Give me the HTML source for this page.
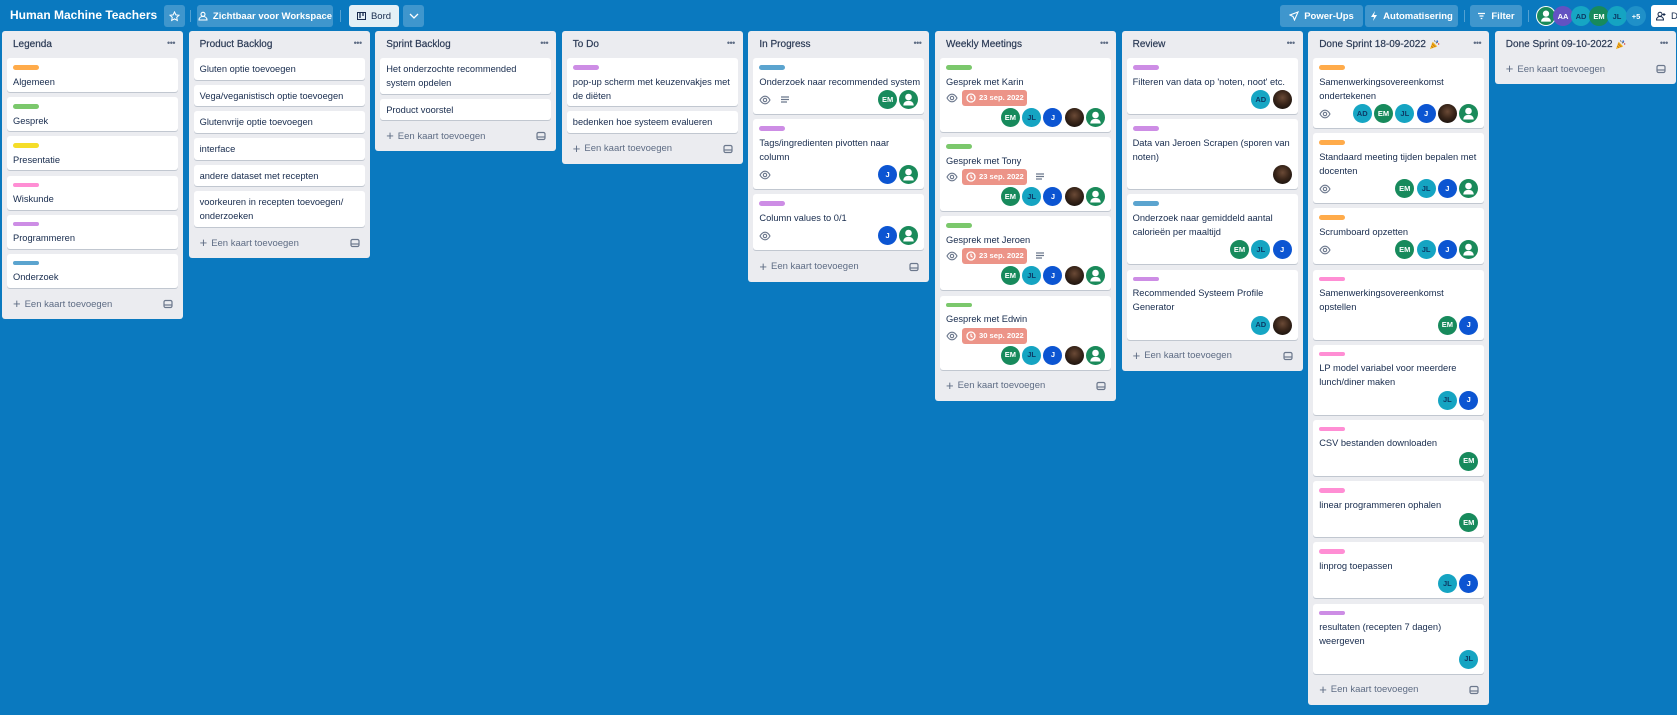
<!DOCTYPE html>
<html><head><meta charset="utf-8">
<style>
*{box-sizing:border-box;margin:0;padding:0}
body{width:1677px;height:715px;overflow:hidden;background:#0a79bf;font-family:"Liberation Sans",Arial,sans-serif;color:#172b4d;position:relative}
.hdr{position:absolute;left:0;top:0;width:1677px;height:31px}
.title{position:absolute;left:10px;top:8px;font-weight:bold;font-size:12px;color:#fff;white-space:nowrap}
.hb{position:absolute;top:5px;height:22px;background:rgba(255,255,255,.22);border-radius:3px;color:#fff;font-size:9.5px;font-weight:bold;display:flex;align-items:center;justify-content:center;gap:5px;white-space:nowrap}
.sep{position:absolute;top:10px;width:1px;height:12px;background:rgba(255,255,255,.3)}
.list{position:absolute;top:31px;width:181px;background:#ebecf0;border-radius:3px;padding:0 5px}
.lh{height:27px;display:flex;align-items:center;padding-left:6px;font-size:10px;color:#2b3a55;position:relative;white-space:nowrap;-webkit-text-stroke:.2px #2b3a55}
.lh .dots{position:absolute;right:3px;top:7px;font-size:9px;color:#5e6c84;letter-spacing:-.5px;-webkit-text-stroke:0}
.card{background:#fff;border-radius:3px;box-shadow:0 1px 0 #c1c7d0;padding:4px 6px 3.5px;margin-bottom:5.2px;font-size:9.3px;line-height:14px;color:#172b4d;white-space:nowrap}
.lb{width:26px;height:4.5px;border-radius:3px;margin:3px 0 5px}
.o{background:#ffab4a}.g{background:#7bc86c}.y{background:#f5dd29}.p{background:#ff8ed4}.pu{background:#cd8de5}.b{background:#5ba4cf}
.ft{display:flex;flex-wrap:wrap;align-items:center;margin:1.5px 0 1.5px;min-height:19px}
.bd{display:flex;align-items:center;gap:4px}
.avs{margin-left:auto;display:flex;gap:2.3px}
.full{width:100%;justify-content:flex-end;margin-top:2px}
.av{width:19px;height:19px;border-radius:50%;display:flex;align-items:center;justify-content:center;font-size:7.5px;font-weight:bold}
.em{background:#178a5c;color:#fff}.jl{background:#15a4c2;color:#0d3b66}.j{background:#0c55d2;color:#fff}.ad{background:#16a6c4;color:#0d3b66}.aa{background:#6352c2;color:#fff}.pl{background:#1f90c8;color:#fff}
.ph{background:radial-gradient(circle at 50% 40%,#6b4a36 0,#3a261a 45%,#1b130e 80%)}
.date{background:#ec9488;color:#fff;font-weight:bold;font-size:7.6px;height:16px;width:65px;border-radius:3px;display:flex;align-items:center;padding-left:4px;gap:3px;white-space:nowrap;overflow:hidden}
.add{height:22px;margin:4px 0 4px;display:flex;align-items:center;padding-left:6px;font-size:9.5px;color:#5e6c84;position:relative;white-space:nowrap}
.add .pl2{font-size:13px;margin-right:4px;line-height:10px;font-weight:normal}
.tpl{position:absolute;right:5px;top:6px}
</style></head><body>
<svg width="0" height="0" style="position:absolute">
<defs>
<symbol id="eye" viewBox="0 0 12 12"><path d="M1 6c1.5-2.6 3.2-3.8 5-3.8s3.5 1.2 5 3.8c-1.5 2.6-3.2 3.8-5 3.8S2.5 8.6 1 6z" fill="none" stroke="#6b778c" stroke-width="1.1"/><circle cx="6" cy="6" r="1.7" fill="none" stroke="#6b778c" stroke-width="1.1"/></symbol>
<symbol id="desc" viewBox="0 0 12 12"><path d="M2 3h8M2 5.5h8M2 8h6" stroke="#6b778c" stroke-width="1.2"/></symbol>
<symbol id="usr" viewBox="0 0 19 19"><circle cx="9.5" cy="9.5" r="9.5" fill="#1a8a5a"/><circle cx="9.5" cy="7" r="3.3" fill="#fff"/><path d="M4.3 15.5c0-3 2.2-4.6 5.2-4.6s5.2 1.6 5.2 4.6z" fill="#fff"/></symbol>
<symbol id="clk" viewBox="0 0 10 10"><circle cx="5" cy="5" r="4" fill="none" stroke="#fff" stroke-width="1.3"/><path d="M5 2.8V5.2l1.6 1" fill="none" stroke="#fff" stroke-width="1.2"/></symbol>
<symbol id="tp" viewBox="0 0 10 10"><rect x="1" y="1.5" width="8" height="7" rx="1.5" fill="none" stroke="#6b778c" stroke-width="1.2"/><path d="M1 6h8" stroke="#6b778c" stroke-width="1.2"/></symbol>
<symbol id="party" viewBox="0 0 12 12"><path d="M1 11l3-8 5 5z" fill="#f2b31b"/><path d="M2.3 7.5l2.2 2.2M3.2 5l3.8 3.8" stroke="#c46b14" stroke-width=".8"/><circle cx="9" cy="2.5" r="1" fill="#2d6ad8"/><circle cx="10.5" cy="5.5" r=".8" fill="#d83a3a"/><path d="M6 1.5l.8 1.5M7.5 4.5l2-1" stroke="#333" stroke-width=".8"/></symbol>
</defs></svg>

<div class="hdr">
<div class="title">Human Machine Teachers</div>
<div class="hb" style="left:164px;width:21px"><svg width="11" height="11" viewBox="0 0 12 12"><path d="M6 1l1.5 3.2 3.4.4-2.5 2.3.7 3.4L6 8.6 2.9 10.3l.7-3.4L1.1 4.6l3.4-.4z" fill="none" stroke="#fff" stroke-width="1.1"/></svg></div>
<div class="sep" style="left:190px"></div>
<div class="hb" style="left:197px;width:136px"><svg width="10" height="10" viewBox="0 0 10 10"><circle cx="5" cy="3.3" r="2" fill="none" stroke="#fff" stroke-width="1.1"/><path d="M1 9c0-2.3 1.8-3.5 4-3.5S9 6.7 9 9z" fill="none" stroke="#fff" stroke-width="1.1"/></svg>Zichtbaar voor Workspace</div>
<div class="sep" style="left:340px"></div>
<div class="hb" style="left:349px;width:50px;background:#e4f0f6;color:#172b4d;font-weight:normal"><svg width="9" height="8" viewBox="0 0 9 8"><rect x=".5" y=".5" width="8" height="7" fill="none" stroke="#172b4d"/><path d="M3 1v5M6 1v3" stroke="#172b4d" stroke-width="1.3"/></svg>Bord</div>
<div class="hb" style="left:403px;width:21px"><svg width="10" height="6" viewBox="0 0 10 6"><path d="M1 1l4 4 4-4" fill="none" stroke="#fff" stroke-width="1.3"/></svg></div>
<div class="hb" style="left:1280px;width:83px"><svg width="10" height="10" viewBox="0 0 10 10"><path d="M9 1L1 4l3 1.5L5.5 9z" fill="none" stroke="#fff" stroke-width="1.1"/></svg>Power-Ups</div>
<div class="hb" style="left:1365px;width:93px"><svg width="8" height="10" viewBox="0 0 8 10"><path d="M5 0L1 6h3L3 10l4-6H4z" fill="#fff"/></svg>Automatisering</div>
<div class="sep" style="left:1464px"></div>
<div class="hb" style="left:1470px;width:52px"><svg width="9" height="8" viewBox="0 0 9 8"><path d="M1 1.5h7M2.5 4h4M3.7 6.5h1.6" stroke="#fff" stroke-width="1.2"/></svg>Filter</div>
<div class="sep" style="left:1528px"></div>
<div style="position:absolute;left:1536px;top:6px;display:flex;gap:0">
<svg width="20" height="20" style="margin-right:-1px"><circle cx="10" cy="10" r="10" fill="#fff"/><use href="#usr" x="1" y="1" width="18" height="18"/></svg>
<div class="av aa" style="width:20px;height:20px;margin-left:-2px">AA</div>
<div class="av ad" style="width:20px;height:20px;margin-left:-2px">AD</div>
<div class="av em" style="width:20px;height:20px;margin-left:-2px">EM</div>
<div class="av jl" style="width:20px;height:20px;margin-left:-2px">JL</div>
<div class="av pl" style="width:20px;height:20px;margin-left:-1px">+5</div>
</div>
<div class="hb" style="left:1651px;width:40px;background:#fff;color:#172b4d;justify-content:flex-start;padding-left:5px;font-weight:normal"><svg width="10" height="10" viewBox="0 0 10 10"><circle cx="4" cy="3.3" r="2" fill="none" stroke="#172b4d"/><path d="M.5 9c0-2.3 1.5-3.5 3.5-3.5S7.5 6.7 7.5 9zM8 2v3M6.5 3.5h3" fill="none" stroke="#172b4d"/></svg>D</div>
</div>

<div class="list" style="left:2px">
<div class="lh">Legenda<span class="dots">•••</span></div>
<div class="card"><div class="lb o"></div>Algemeen</div>
<div class="card"><div class="lb g"></div>Gesprek</div>
<div class="card"><div class="lb y"></div>Presentatie</div>
<div class="card"><div class="lb p"></div>Wiskunde</div>
<div class="card"><div class="lb pu"></div>Programmeren</div>
<div class="card"><div class="lb b"></div>Onderzoek</div>
<div class="add"><span class="pl2">+</span>Een kaart toevoegen<svg class="tpl" width="10" height="10"><use href="#tp"/></svg></div>
</div>

<div class="list" style="left:188.6px">
<div class="lh">Product Backlog<span class="dots">•••</span></div>
<div class="card">Gluten optie toevoegen</div>
<div class="card">Vega/veganistisch optie toevoegen</div>
<div class="card">Glutenvrije optie toevoegen</div>
<div class="card">interface</div>
<div class="card">andere dataset met recepten</div>
<div class="card">voorkeuren in recepten toevoegen/<br>onderzoeken</div>
<div class="add"><span class="pl2">+</span>Een kaart toevoegen<svg class="tpl" width="10" height="10"><use href="#tp"/></svg></div>
</div>

<div class="list" style="left:375.2px">
<div class="lh">Sprint Backlog<span class="dots">•••</span></div>
<div class="card">Het onderzochte recommended<br>system opdelen</div>
<div class="card">Product voorstel</div>
<div class="add"><span class="pl2">+</span>Een kaart toevoegen<svg class="tpl" width="10" height="10"><use href="#tp"/></svg></div>
</div>

<div class="list" style="left:561.8px">
<div class="lh">To Do<span class="dots">•••</span></div>
<div class="card"><div class="lb pu"></div>pop-up scherm met keuzenvakjes met<br>de diëten</div>
<div class="card">bedenken hoe systeem evalueren</div>
<div class="add"><span class="pl2">+</span>Een kaart toevoegen<svg class="tpl" width="10" height="10"><use href="#tp"/></svg></div>
</div>

<div class="list" style="left:748.4px">
<div class="lh">In Progress<span class="dots">•••</span></div>
<div class="card"><div class="lb b"></div>Onderzoek naar recommended system
<div class="ft"><div class="bd"><svg width="12" height="12"><use href="#eye"/></svg><svg width="12" height="12" style="margin-left:4px"><use href="#desc"/></svg></div><div class="avs"><div class="av em">EM</div><svg width="19" height="19"><use href="#usr"/></svg></div></div></div>
<div class="card"><div class="lb pu"></div>Tags/ingredienten pivotten naar<br>column
<div class="ft"><div class="bd"><svg width="12" height="12"><use href="#eye"/></svg></div><div class="avs"><div class="av j">J</div><svg width="19" height="19"><use href="#usr"/></svg></div></div></div>
<div class="card"><div class="lb pu"></div>Column values to 0/1
<div class="ft"><div class="bd"><svg width="12" height="12"><use href="#eye"/></svg></div><div class="avs"><div class="av j">J</div><svg width="19" height="19"><use href="#usr"/></svg></div></div></div>
<div class="add"><span class="pl2">+</span>Een kaart toevoegen<svg class="tpl" width="10" height="10"><use href="#tp"/></svg></div>
</div>

<div class="list" style="left:935px">
<div class="lh">Weekly Meetings<span class="dots">•••</span></div>
<div class="card"><div class="lb g"></div>Gesprek met Karin
<div class="ft"><div class="bd"><svg width="12" height="12"><use href="#eye"/></svg><div class="date"><svg width="10" height="10"><use href="#clk"/></svg>23 sep. 2022</div></div><div class="avs full"><div class="av em">EM</div><div class="av jl">JL</div><div class="av j">J</div><div class="av ph"></div><svg width="19" height="19"><use href="#usr"/></svg></div></div></div>
<div class="card"><div class="lb g"></div>Gesprek met Tony
<div class="ft"><div class="bd"><svg width="12" height="12"><use href="#eye"/></svg><div class="date"><svg width="10" height="10"><use href="#clk"/></svg>23 sep. 2022</div><svg width="12" height="12" style="margin-left:3px"><use href="#desc"/></svg></div><div class="avs full"><div class="av em">EM</div><div class="av jl">JL</div><div class="av j">J</div><div class="av ph"></div><svg width="19" height="19"><use href="#usr"/></svg></div></div></div>
<div class="card"><div class="lb g"></div>Gesprek met Jeroen
<div class="ft"><div class="bd"><svg width="12" height="12"><use href="#eye"/></svg><div class="date"><svg width="10" height="10"><use href="#clk"/></svg>23 sep. 2022</div><svg width="12" height="12" style="margin-left:3px"><use href="#desc"/></svg></div><div class="avs full"><div class="av em">EM</div><div class="av jl">JL</div><div class="av j">J</div><div class="av ph"></div><svg width="19" height="19"><use href="#usr"/></svg></div></div></div>
<div class="card"><div class="lb g"></div>Gesprek met Edwin
<div class="ft"><div class="bd"><svg width="12" height="12"><use href="#eye"/></svg><div class="date"><svg width="10" height="10"><use href="#clk"/></svg>30 sep. 2022</div></div><div class="avs full"><div class="av em">EM</div><div class="av jl">JL</div><div class="av j">J</div><div class="av ph"></div><svg width="19" height="19"><use href="#usr"/></svg></div></div></div>
<div class="add"><span class="pl2">+</span>Een kaart toevoegen<svg class="tpl" width="10" height="10"><use href="#tp"/></svg></div>
</div>

<div class="list" style="left:1121.6px">
<div class="lh">Review<span class="dots">•••</span></div>
<div class="card"><div class="lb pu"></div>Filteren van data op 'noten, noot' etc.
<div class="ft"><div class="avs"><div class="av ad">AD</div><div class="av ph"></div></div></div></div>
<div class="card"><div class="lb pu"></div>Data van Jeroen Scrapen (sporen van<br>noten)
<div class="ft"><div class="avs"><div class="av ph"></div></div></div></div>
<div class="card"><div class="lb b"></div>Onderzoek naar gemiddeld aantal<br>calorieën per maaltijd
<div class="ft"><div class="avs"><div class="av em">EM</div><div class="av jl">JL</div><div class="av j">J</div></div></div></div>
<div class="card"><div class="lb pu"></div>Recommended Systeem Profile<br>Generator
<div class="ft"><div class="avs"><div class="av ad">AD</div><div class="av ph"></div></div></div></div>
<div class="add"><span class="pl2">+</span>Een kaart toevoegen<svg class="tpl" width="10" height="10"><use href="#tp"/></svg></div>
</div>

<div class="list" style="left:1308.2px">
<div class="lh">Done Sprint 18-09-2022&nbsp;<svg width="11" height="11"><use href="#party"/></svg><span class="dots">•••</span></div>
<div class="card"><div class="lb o"></div>Samenwerkingsovereenkomst<br>ondertekenen
<div class="ft"><div class="bd"><svg width="12" height="12"><use href="#eye"/></svg></div><div class="avs"><div class="av ad">AD</div><div class="av em">EM</div><div class="av jl">JL</div><div class="av j">J</div><div class="av ph"></div><svg width="19" height="19"><use href="#usr"/></svg></div></div></div>
<div class="card"><div class="lb o"></div>Standaard meeting tijden bepalen met<br>docenten
<div class="ft"><div class="bd"><svg width="12" height="12"><use href="#eye"/></svg></div><div class="avs"><div class="av em">EM</div><div class="av jl">JL</div><div class="av j">J</div><svg width="19" height="19"><use href="#usr"/></svg></div></div></div>
<div class="card"><div class="lb o"></div>Scrumboard opzetten
<div class="ft"><div class="bd"><svg width="12" height="12"><use href="#eye"/></svg></div><div class="avs"><div class="av em">EM</div><div class="av jl">JL</div><div class="av j">J</div><svg width="19" height="19"><use href="#usr"/></svg></div></div></div>
<div class="card"><div class="lb p"></div>Samenwerkingsovereenkomst<br>opstellen
<div class="ft"><div class="avs"><div class="av em">EM</div><div class="av j">J</div></div></div></div>
<div class="card"><div class="lb p"></div>LP model variabel voor meerdere<br>lunch/diner maken
<div class="ft"><div class="avs"><div class="av jl">JL</div><div class="av j">J</div></div></div></div>
<div class="card"><div class="lb p"></div>CSV bestanden downloaden
<div class="ft"><div class="avs"><div class="av em">EM</div></div></div></div>
<div class="card"><div class="lb p"></div>linear programmeren ophalen
<div class="ft"><div class="avs"><div class="av em">EM</div></div></div></div>
<div class="card"><div class="lb p"></div>linprog toepassen
<div class="ft"><div class="avs"><div class="av jl">JL</div><div class="av j">J</div></div></div></div>
<div class="card"><div class="lb pu"></div>resultaten (recepten 7 dagen)<br>weergeven
<div class="ft"><div class="avs"><div class="av jl">JL</div></div></div></div>
<div class="add"><span class="pl2">+</span>Een kaart toevoegen<svg class="tpl" width="10" height="10"><use href="#tp"/></svg></div>
</div>

<div class="list" style="left:1494.8px">
<div class="lh">Done Sprint 09-10-2022&nbsp;<svg width="11" height="11"><use href="#party"/></svg><span class="dots">•••</span></div>
<div class="add" style="margin-top:0"><span class="pl2">+</span>Een kaart toevoegen<svg class="tpl" width="10" height="10"><use href="#tp"/></svg></div>
</div>
</body></html>
